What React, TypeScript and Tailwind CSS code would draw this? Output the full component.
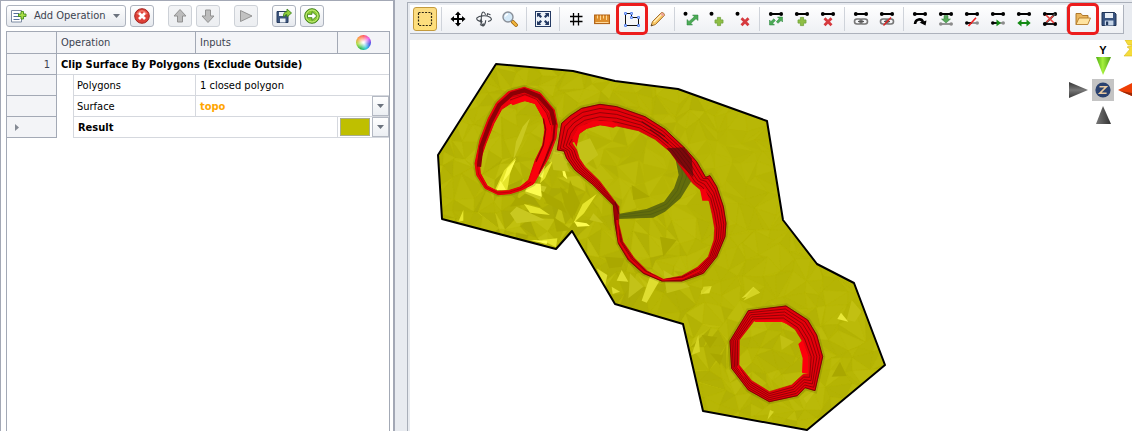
import type { ReactNode } from 'react';

type Point = [number, number];
/** outer x, outer y, inner x, inner y */
type RingPair = [number, number, number, number];

const BOUNDARY =
  '496,64 573,71 615,81 678,89 767,121 783,220 817,264 854,283 885,365 807,430 703,411 683,324 615,304 572,231 556,249 442,219 438,155';

const PIT_WEST: RingPair[] = [
  [283, 112, 285, 152], [330, 128, 315, 160], [373, 180, 340, 205], [382, 225, 345, 240],
  [378, 265, 338, 285], [355, 325, 316, 330], [310, 402, 296, 390], [275, 420, 270, 411],
  [240, 431, 235, 422], [205, 434, 203, 424], [165, 415, 172, 408], [140, 375, 151, 370],
  [135, 340, 148, 338], [150, 270, 168, 280], [175, 205, 192, 220], [200, 158, 215, 178],
  [235, 125, 245, 158],
];

const PIT_MAIN: RingPair[] = [
  [35, 100, 80, 150], [60, 78, 88, 130], [95, 55, 110, 115], [150, 43, 150, 105],
  [200, 50, 200, 108], [285, 80, 265, 122], [345, 118, 315, 148], [405, 175, 360, 185],
  [440, 215, 393, 232], [467, 262, 428, 280], [480, 257, 452, 300], [500, 290, 478, 335],
  [520, 350, 487, 375], [528, 400, 494, 415], [525, 440, 492, 450], [500, 500, 475, 500],
  [460, 550, 442, 532], [395, 573, 395, 558], [335, 573, 340, 568], [280, 550, 292, 543],
  [235, 510, 252, 503], [205, 460, 219, 455], [195, 400, 206, 400], [190, 345, 207, 350],
  [130, 285, 148, 272], [75, 240, 105, 230], [50, 205, 88, 205], [42, 183, 80, 180],
  [22, 180, 66, 158],
];

const PIT_SOUTH: RingPair[] = [
  [318, 198, 308, 243], [205, 212, 222, 243], [150, 303, 178, 300], [155, 385, 177, 375],
  [205, 450, 215, 422], [268, 485, 268, 455], [352, 467, 335, 435], [375, 443, 370, 403],
  [405, 452, 385, 402], [428, 350, 385, 350], [410, 285, 365, 300], [383, 240, 345, 268],
];

/** Contour of a pit at depth t, 0 being the rim and 1 the floor. */
function contour(pairs: RingPair[], t: number): string {
  return (
    'M' +
    pairs
      .map(([ox, oy, ix, iy]) => `${(ox + (ix - ox) * t).toFixed(1)} ${(oy + (iy - oy) * t).toFixed(1)}`)
      .join('L') +
    'Z'
  );
}

function noise(a: number, b: number): number {
  const n = Math.sin(a * 127.1 + b * 311.7) * 43758.5453;
  return n - Math.floor(n);
}

const ROUGH_SPOTS = [
  { x: 535, y: 205, r: 45, gain: 18 },
  { x: 480, y: 215, r: 40, gain: 8 },
  { x: 630, y: 280, r: 34, gain: 14 },
  { x: 705, y: 350, r: 40, gain: 10 },
];

/** Jittered triangle mesh with a flat shade per facet. */
function buildFacets() {
  const step = 14;
  const vertex = (c: number, r: number): Point => [
    425 + c * step + (noise(c, r) - 0.5) * 16,
    55 + r * step + (noise(r + 50, c) - 0.5) * 16,
  ];
  const facets: { points: string; fill: string }[] = [];
  for (let r = 0; r < 28; r++) {
    for (let c = 0; c < 34; c++) {
      const [p, q, s, t] = [vertex(c, r), vertex(c + 1, r), vertex(c + 1, r + 1), vertex(c, r + 1)];
      const flip = noise(c + 9, r + 4) > 0.5;
      const tris = flip ? [[p, q, s], [p, s, t]] : [[p, q, t], [q, s, t]];
      tris.forEach((tri, k) => {
        const [x, y] = tri[0];
        let gain = x > 700 && y < 300 ? 4 : 8;
        for (const spot of ROUGH_SPOTS) {
          const d = ((x - spot.x) ** 2 + (y - spot.y) ** 2) / spot.r ** 2;
          gain += spot.gain * Math.exp(-d);
        }
        const shade = (noise(c + k * 31, r * 3 + k) - 0.5) * gain * 1.3;
        const red = Math.round(183 + shade);
        const blue = Math.max(4, Math.round(5 + shade));
        facets.push({
          points: tri.map(([a, b]) => `${a.toFixed(1)},${b.toFixed(1)}`).join(' '),
          fill: `rgb(${red},${red - 1},${blue})`,
        });
      });
    }
  }
  return facets;
}

const FACETS = buildFacets();

function Benches({ pairs, count }: { pairs: RingPair[]; count: number }) {
  const levels = Array.from({ length: count }, (_, i) => i / count);
  return (
    <>
      <path d={contour(pairs, -0.04)} fill="none" stroke="#5a5a00" strokeOpacity=".22" strokeWidth="12" />
      <path d={contour(pairs, 0) + contour(pairs, 1)} fill="#e4000a" fillRule="evenodd" stroke="#c80008" strokeWidth="2" />
      {levels.map((t) => (
        <path key={t} d={contour(pairs, t)} fill="none" stroke="#6e0006" strokeOpacity=".85" strokeWidth={t ? 2.4 : 3} />
      ))}
    </>
  );
}

function TerrainView() {
  return (
    <svg className="block h-[391px] w-[722px] shrink-0" viewBox="410 40 722 391" role="img" aria-label="Clipped topography surface">
      <defs>
        <clipPath id="surface-clip">
          <polygon points={BOUNDARY} />
        </clipPath>
      </defs>
      <polygon points={BOUNDARY} fill="#b7b505" />
      <g clipPath="url(#surface-clip)">
        {FACETS.map((f, i) => (
          <polygon key={i} points={f.points} fill={f.fill} stroke={f.fill} strokeWidth=".5" />
        ))}
        {/* steep facets catching the light */}
        <g transform="translate(430 50) scale(.33333)">
          <path fill="#c9c820" d="M300 205L278 230 258 275 250 330 275 275ZM360 225L350 330 420 300 405 240ZM345 330L395 310 425 330 395 350ZM240 490L260 470 345 510 260 520ZM300 400L350 410 330 450 285 430Z" />
          <path fill="#aaa800" d="M330 420L395 455 410 490 350 460ZM260 440L300 462 240 470ZM420 390L450 460 432 500 412 440ZM370 500L425 540 380 545Z" />
          <path fill="#e6e52c" d="M258 322L222 362 196 418 232 420 240 372ZM370 330L338 362 330 400 345 385ZM500 432L458 462 430 520 462 490ZM100 480L85 515 100 512ZM282 462L330 475 360 495 300 488ZM335 570L382 565 378 592Z" />
          <path fill="#fdfc50" d="M258 328L232 355 216 400 238 372ZM300 398L332 402 335 440 285 424ZM395 350L402 352 412 388 400 378ZM432 514L470 520 480 528 442 530ZM212 392L200 420 228 420ZM320 375L345 345 338 385ZM300 570L352 572 350 582Z" />
        </g>
        <g transform="translate(550 90) scale(.33333)">
          <path fill="#c3c218" d="M80 160L120 145 145 195 92 235ZM130 370L160 400 118 390ZM0 185L40 200 60 245 10 240ZM240 550L280 590 235 625ZM340 540L420 590 350 610Z" />
          <path fill="#aaa800" d="M165 500L225 505 215 530 178 535ZM30 290L75 330 68 390 45 350ZM245 285L300 320 250 330ZM330 440L380 450 340 500Z" />
          <path fill="#dfde30" d="M140 535L172 555 165 590ZM215 540L235 575 200 572ZM305 545L330 570 290 638 275 632ZM455 600L485 588 478 610 452 612ZM610 590L630 608 575 625ZM185 590L210 605 188 612Z" />
        </g>
        <g transform="translate(680 240) scale(.33333)">
          <path fill="#d5d424" d="M220 142L240 158 190 182ZM70 140L95 138 62 165ZM55 285L60 335 35 345ZM270 510L282 515 262 540Z" />
          <path fill="#c2c012" d="M515 180L545 215 525 245 500 240ZM300 285L342 305 305 330ZM370 475L412 445 380 490Z" />
          <path fill="#e9e83a" d="M483 218L505 245 472 237Z" />
          <path fill="#a9a700" d="M480 365L500 408 455 410ZM90 340L130 345 120 375ZM65 285L112 292 90 325Z" />
        </g>

        {/* west pit */}
        <g transform="translate(430 50) scale(.33333)">
          <path d={contour(PIT_WEST, -0.04)} fill="none" stroke="#5a5a00" strokeOpacity=".22" strokeWidth="12" />
          <path d={contour(PIT_WEST, 0) + contour(PIT_WEST, 1)} fill="#f0000b" fillRule="evenodd" stroke="#e4000a" strokeWidth="3" />
          <path d={contour(PIT_WEST, 0.5)} fill="none" stroke="#a80008" strokeWidth="2" />
          <path fill="none" stroke="#8c0006" strokeWidth="13" d="M147 350L154 290 182 215 208 165 245 132 283 121 327 139 364 182 374 225" />
          <path fill="none" stroke="#8c0006" strokeWidth="6" d="M374 225L370 268 345 330 325 370" />
          <path fill="#fb000c" d="M238 155L285 138 320 150 350 190 364 220 362 268 345 322 314 398 298 394 318 332 338 285 345 238 338 205 315 162 285 153 248 166Z" />
          <path fill="none" stroke="#a00008" strokeWidth="3" d="M240 150L285 134 320 148 350 190 362 225" />
          <path fill="none" stroke="#8c0006" strokeWidth="4" d="M318 335L340 285 347 238 340 205" />
        </g>

        {/* main pit, with the overlapped phase in shade */}
        <g transform="translate(550 90) scale(.33333)">
          <path fill="#626c0c" d="M375 200L432 225 426 270 392 325 345 365 310 383 205 387 204 372 290 357 342 335 372 295 386 255Z" />
          <path fill="none" stroke="#4f5c10" strokeWidth="2" d="M394 215L397 258 382 302 350 342 300 364 206 376M408 225L409 262 390 310 350 354 302 373 206 381" />
          <Benches pairs={PIT_MAIN} count={5} />
          <path fill="#f5000c" d="M66 145L85 112 130 92 185 94 207 105 190 113 150 105 110 116 88 132 80 170ZM450 298L466 296 478 332 457 332Z" />
          {/* narrow stretches, where the benches run together */}
          <path fill="none" stroke="#e8000a" strokeWidth="5" d="M201 390L207 455 240 507 283 546 338 570 398 566 450 541" />
          <path fill="#4a0d0c" fillOpacity=".68" d="M350 175L402 172 425 205 430 262 385 218Z" />
          <path fill="none" stroke="#4a0810" strokeWidth="4" strokeOpacity=".6" d="M275 95L345 140M300 118L355 160M195 335L207 372" />
        </g>

        {/* south pit */}
        <g transform="translate(680 240) scale(.33333)">
          <Benches pairs={PIT_SOUTH} count={5} />
          <path fill="#fd000c" d="M355 312L368 300 384 345 385 402 366 398 368 355ZM225 241L308 241 330 256 305 246 225 246ZM174 375L196 415 190 408 172 382Z" />
        </g>
      </g>
      <polygon points={BOUNDARY} fill="none" stroke="#000" strokeWidth="2" strokeLinejoin="round" />
    </svg>
  );
}

function AxisGizmo() {
  return (
    <svg className="absolute right-0 top-0 h-[88px] w-16" viewBox="0 0 64 88" aria-label="View orientation">
      <defs>
        <linearGradient id="axis-y"><stop stopColor="#4fae10" /><stop offset=".45" stopColor="#a6f03c" /><stop offset="1" stopColor="#4a9e12" /></linearGradient>
        <linearGradient id="axis-dark"><stop stopColor="#777" /><stop offset="1" stopColor="#333" /></linearGradient>
        <linearGradient id="axis-side" x2="0" y2="1"><stop stopColor="#333" /><stop offset=".5" stopColor="#777" /><stop offset="1" stopColor="#3a3a3a" /></linearGradient>
      </defs>
      <path fill="#f5dc3a" stroke="#d8b81c" strokeWidth=".6" d="M57 0H66V5L60 5ZM66 5V16H56L62 9 59 7Z" />
      <text x="35" y="14" textAnchor="middle" fontSize="11" fontWeight="bold" fontFamily="Liberation Sans, sans-serif">Y</text>
      <path fill="url(#axis-y)" d="M28 17H43L35 35Z" />
      <path fill="url(#axis-side)" d="M1 42L20 50 1 58Z" />
      <rect x="24" y="39" width="22" height="22" fill="#c4c4c4" />
      <circle cx="35" cy="50" r="7.6" fill="#2a416f" />
      <path fill="none" stroke="#e8c9a0" strokeWidth="1.6" d="M31.5 46.8H38.3L31.8 53.2H38.6" />
      <path fill="#ee3e05" d="M50 50L64 43V56Z" />
      <path fill="#9b2805" d="M52 51L64 53V56Z" />
      <path fill="url(#axis-dark)" d="M28 84L35 66 43 84Z" />
    </svg>
  );
}

function Icon({ children }: { children: ReactNode }) {
  return (
    <svg className="size-4 shrink-0" viewBox="0 0 16 16" fill="none" aria-hidden="true">
      {children}
    </svg>
  );
}

/* shared glyph pieces */
const segment = (
  <g fill="#000">
    <path d="M2 2H14V4H2Z" />
    <circle cx="2.8" cy="3" r="1.9" />
    <circle cx="13.2" cy="3" r="1.9" />
  </g>
);
const node = <circle cx="2.5" cy="2.8" r="2" fill="#000" />;
const plus = <path fill="#8fbe45" stroke="#6fa33a" strokeWidth=".8" d="M6.4 6.4H9.6V8.9H12V12.1H9.6V14.6H6.4V12.1H4V8.9H6.4Z" />;
const cross = <path stroke="#d63a3f" strokeWidth="2.8" d="M4.5 7.2L11.5 14.2M11.5 7.2L4.5 14.2" />;
const stretch = <path fill="#4cab55" stroke="#26803a" strokeWidth=".5" d="M7.5 4H13V9.5L11 7.7 5.9 12.2 7.5 14H2V8.5L4 10.4 9.3 5.8Z" />;
const stretchWide = <path fill="#4cab55" stroke="#26803a" strokeWidth=".5" d="M9.5 6H14.5V11L13 9.5 10 12.3 8.3 10.7 11.2 7.8ZM6.5 14H1.5V9L3 10.5 5.8 7.8 7.4 9.4 4.7 12.2Z" />;
const link = (
  <>
    <rect x="1.5" y="8" width="7.5" height="5" rx="2.5" stroke="#777" strokeWidth="1.6" />
    <rect x="7" y="8" width="7.5" height="5" rx="2.5" stroke="#777" strokeWidth="1.6" />
    <path stroke="#555" strokeWidth="1.2" d="M5 10.5H11" />
  </>
);
const lowerSegment = (
  <>
    <path stroke="#000" strokeWidth="1.8" d="M3 12H8" />
    <circle cx="2.8" cy="12" r="1.8" fill="#000" />
    <path stroke="#8c8c8c" strokeWidth="1.8" d="M8 12H13" />
    <circle cx="13.2" cy="12" r="1.8" fill="#8c8c8c" />
  </>
);

const ICONS = {
  select: <path stroke="#2b2512" strokeWidth="1.2" strokeDasharray="2 1.3" d="M1.5 1.5H14.5V14.5H1.5Z" />,
  move: <path fill="#000" d="M8 .5L11 4H9V7H12V5L15.5 8 12 11V9H9V12H11L8 15.5 5 12H7V9H4V11L.5 8 4 5V7H7V4H5Z" />,
  rotate: (
    <g stroke="#454b52" strokeWidth="1.1">
      <path d="M9.5 3.8C9 1.5 7.4.4 6.5 1.3 5 3 4.8 12 6.5 14.6 8 16 9.6 12 9.7 9.2M7.8 12.5L6.5 14.7 4 13.5" />
      <path d="M12 10.5C15.5 10 16.5 8 14 6.2 10 4 3 4.6 1 6.8 0 8.6 2.2 10.4 5.8 10.6M4 8.6L6 10.6 4.2 12.4M11 5.5L11.5 2.8 14.5 3.8" />
    </g>
  ),
  zoom: (
    <>
      <path stroke="#a36a16" strokeWidth="3.8" strokeLinecap="round" d="M10.8 10.8L14 14" />
      <path stroke="#f3b73c" strokeWidth="2.2" strokeLinecap="round" d="M10.8 10.8L14 14" />
      <circle cx="6" cy="6" r="5" fill="#d4e9f8" stroke="#8a9099" strokeWidth="1.4" />
      <path stroke="#fff" strokeWidth="1.3" d="M3.2 5.6C3.5 4 4.5 3.2 6 3" />
    </>
  ),
  extents: (
    <>
      <rect x=".5" y=".5" width="15" height="15" fill="#eff4fa" stroke="#253a63" />
      <path fill="#253a63" d="M2 2H6.3L5 3.3 7 5.5 5.5 7 3.3 5 2 6.3ZM14 2V6.3L12.7 5 10.5 7 9 5.5 11 3.3 9.7 2ZM2 14V9.7L3.3 11 5.5 9 7 10.5 5 12.7 6.3 14ZM14 14H9.7L11 12.7 9 10.5 10.5 9 12.7 11 14 9.7Z" />
    </>
  ),
  grid: <path stroke="#000" strokeWidth="1.3" d="M5.5 2V14.5M10.5 2V14.5M2 5.5H14.5M2 10.5H14.5" />,
  ruler: (
    <>
      <rect x=".6" y="4" width="15" height="8.6" fill="#dd8e2c" stroke="#ad5c10" />
      <path stroke="#ffd897" d="M3.5 4.5V7.5M6.5 4.5V9M9.5 4.5V7.5M12.5 4.5V9M1.5 11.5H14.5" />
    </>
  ),
  polygon: (
    <>
      <path stroke="#111" d="M1.5 2.5H7.5V6.5H14.5V14.5H1.5Z" />
      <path fill="#fff" stroke="#3a6ff0" strokeWidth=".9" d="M.6 1.6H2.4V3.4H.6ZM6.6 1.6H8.4V3.4H6.6ZM6.6 5.6H8.4V7.4H6.6ZM13.6 5.6H15.4V7.4H13.6ZM.6 13.6H2.4V15.4H.6ZM13.6 13.6H15.4V15.4H13.6Z" />
    </>
  ),
  pencil: (
    <>
      <path fill="#f9c763" stroke="#9a6422" strokeWidth=".9" d="M2.5 10.5L11.5 1.5Q14.2 1.3 14.5 4.3L5.5 13.5 1 15Z" />
      <path stroke="#fff0c0" strokeWidth="1.2" d="M4 11L12 3" />
      <path fill="#f0a39a" d="M11.5 1.7Q14 1.5 14.2 4.4L12.8 5.6 10.3 3Z" />
      <path fill="#333" d="M1.6 13.2L3 14.2 1 15Z" />
    </>
  ),
  nodeMove: <>{node}<g transform="translate(2 0)">{stretch}</g></>,
  nodeAdd: <>{node}<g transform="translate(2 0)">{plus}</g></>,
  nodeDelete: <>{node}<g transform="translate(2 0)">{cross}</g></>,
  segMove: <>{segment}{stretchWide}</>,
  segAdd: <>{segment}{plus}</>,
  segDelete: <>{segment}{cross}</>,
  link: <>{segment}{link}</>,
  unlink: <>{segment}{link}<path stroke="#e02020" strokeWidth="1.4" d="M4.5 14.5L12 6.5" /></>,
  segArc: <>{segment}<path stroke="#000" strokeWidth="2.6" d="M3 13C3.5 7.6 9.5 7 11 11" /><path fill="#000" d="M7.5 11.5L14.5 9.5 13.5 14.5Z" /></>,
  segDrop: <>{segment}<path stroke="#8c8c8c" strokeWidth="1.8" d="M2 13H14" /><circle cx="2.8" cy="13" r="1.8" fill="#8c8c8c" /><circle cx="13.2" cy="13" r="1.8" fill="#8c8c8c" /><path fill="#58a85a" stroke="#2f7a38" strokeWidth=".5" d="M6 4.5H10V8H12.5L8 12 3.5 8H6Z" /></>,
  segCut: <>{segment}{lowerSegment}<path stroke="#ee2222" strokeWidth="1.6" d="M4.5 15L12 6.8" /></>,
  segExtend: <>{segment}{lowerSegment}<path fill="#138a13" d="M6.5 8.5L11 12 6.5 15.3Z" /></>,
  segSlide: <>{segment}<path fill="#138a13" d="M1.3 12L5.5 8.5V11H10.5V8.5L14.7 12 10.5 15.5V13H5.5V15.5Z" /></>,
  segReverse: (
    <>
      {segment}
      <path stroke="#444" strokeWidth="1.9" d="M13 3L3 13" />
      <path stroke="#000" strokeWidth="1.8" d="M3 13H13" />
      <circle cx="2.8" cy="13" r="1.9" fill="#000" />
      <circle cx="13.2" cy="13" r="1.9" fill="#000" />
      <path stroke="#e8403c" strokeWidth="1.7" d="M4 4L12 12M11 5L4.5 11" />
    </>
  ),
  open: (
    <>
      <path fill="#eab65e" stroke="#a66d1e" strokeWidth=".9" d="M1 13.5V2.5H6L7.5 4.5H13V7" />
      <path fill="#ffe3a0" stroke="#b47a28" strokeWidth=".9" d="M1 13.5L4 7H15.5L12.8 13.5Z" />
    </>
  ),
  save: (
    <>
      <path fill="#37527e" stroke="#1f3355" d="M1 1.5H13.5L15 3V14.5H1Z" />
      <rect x="4" y="2" width="8" height="5" fill="#e9eff6" />
      <rect x="3.8" y="9.5" width="8.6" height="5" fill="#c7d6e8" />
      <rect x="5" y="10.5" width="2.2" height="3.5" fill="#233a60" />
    </>
  ),
};

type IconName = keyof typeof ICONS;
type Tool = { icon: IconName; label: string; active?: boolean; marked?: boolean };

const VIEW_TOOLS: Tool[][] = [
  [{ icon: 'select', label: 'Select', active: true }],
  [
    { icon: 'move', label: 'Pan' },
    { icon: 'rotate', label: 'Rotate' },
    { icon: 'zoom', label: 'Zoom' },
  ],
  [{ icon: 'extents', label: 'Zoom to extents' }],
  [
    { icon: 'grid', label: 'Grid' },
    { icon: 'ruler', label: 'Measure' },
  ],
];

const EDIT_TOOLS: Tool[][] = [
  [
    { icon: 'polygon', label: 'Draw polygon', marked: true },
    { icon: 'pencil', label: 'Edit' },
  ],
  [
    { icon: 'nodeMove', label: 'Move point' },
    { icon: 'nodeAdd', label: 'Add point' },
    { icon: 'nodeDelete', label: 'Delete point' },
  ],
  [
    { icon: 'segMove', label: 'Move segment' },
    { icon: 'segAdd', label: 'Add segment' },
    { icon: 'segDelete', label: 'Delete segment' },
  ],
  [
    { icon: 'link', label: 'Join' },
    { icon: 'unlink', label: 'Unjoin' },
  ],
  [
    { icon: 'segArc', label: 'Reverse direction' },
    { icon: 'segDrop', label: 'Drape' },
    { icon: 'segCut', label: 'Break' },
    { icon: 'segExtend', label: 'Extend' },
    { icon: 'segSlide', label: 'Stretch' },
    { icon: 'segReverse', label: 'Clean' },
  ],
  [
    { icon: 'open', label: 'Open', marked: true },
    { icon: 'save', label: 'Save' },
  ],
];

function ToolButton({ tool }: { tool: Tool }) {
  return (
    <button
      type="button"
      aria-label={tool.label}
      className="relative flex h-6 w-[26px] shrink-0 items-center justify-center"
    >
      {tool.active && (
        <span className="absolute inset-x-px inset-y-0 rounded-[3px] border border-[#c39a3c] bg-linear-to-b from-[#fbdc83] to-[#ffe07a]" />
      )}
      <span className="relative">
        <Icon>{ICONS[tool.icon]}</Icon>
      </span>
      {tool.marked && (
        <span className="pointer-events-none absolute -inset-x-[3px] -inset-y-1 z-10 rounded-[5px] border-[3px] border-[#ec1c1c]" />
      )}
    </button>
  );
}

function ToolStrip({ groups, label }: { groups: Tool[][]; label: string }) {
  return (
    <div
      role="toolbar"
      aria-label={label}
      className="flex h-[29px] items-center border-b border-r border-[#adb2bc] bg-linear-to-b from-white to-[#eef0f4] pl-[2px] pr-px"
    >
      {groups.map((group, i) => (
        <div key={i} className="flex items-center">
          {i > 0 && <span className="mx-[3px] h-6 w-px bg-[#cfd3da]" />}
          {group.map((tool) => (
            <ToolButton key={tool.icon} tool={tool} />
          ))}
        </div>
      ))}
    </div>
  );
}

function PanelButton({ label, disabled, children }: { label: string; disabled?: boolean; children: ReactNode }) {
  return (
    <button
      type="button"
      aria-label={label}
      disabled={disabled}
      className="flex h-[22px] w-6 items-center justify-center rounded-[3px] border border-[#adb3be] bg-linear-to-b from-white to-[#e6e9ee] disabled:border-[#cdd1d7] disabled:from-[#f3f4f6] disabled:to-[#eceef1]"
    >
      <Icon>{children}</Icon>
    </button>
  );
}

function Caret() {
  return (
    <svg className="h-1 w-[7px]" viewBox="0 0 7 4" aria-hidden="true">
      <path fill="#6b727d" d="M0 0H7L3.5 4Z" />
    </svg>
  );
}

function DropCell({ label }: { label: string }) {
  return (
    <td className="border-b border-[#d5d8de]">
      <button
        type="button"
        aria-label={label}
        className="flex h-5 w-full items-center justify-center border border-[#b4b9c3] bg-linear-to-b from-white to-[#eceff3]"
      >
        <Caret />
      </button>
    </td>
  );
}

const rowHead = 'border-b border-r border-[#a3a9b5] bg-[#f3f4f7] font-normal';
const cell = 'border-b border-[#d5d8de]';

function OperationsTable() {
  return (
    <table className="w-full table-fixed border-separate border-spacing-0 text-left whitespace-nowrap">
      <colgroup>
        <col className="w-[50px]" />
        <col className="w-[17px]" />
        <col className="w-[122px]" />
        <col />
        <col className="w-[34px]" />
        <col className="w-[17px]" />
      </colgroup>
      <thead className="bg-[#f3f4f7] text-[#3c4350]">
        <tr className="h-[22px]">
          <th className={rowHead} aria-label="Row" />
          <th colSpan={2} className="border-b border-r border-[#a3a9b5] pl-1 font-normal">Operation</th>
          <th className="border-b border-r border-[#a3a9b5] pl-1 font-normal">Inputs</th>
          <th colSpan={2} className="border-b border-[#a3a9b5] font-normal" aria-label="Colour">
            <span
              className="mx-auto block size-[15px] rounded-full bg-[radial-gradient(circle,#fff_5%,transparent_65%),conic-gradient(#ff5a5a,#ee58e8,#3e4ee8,#29c8dc,#27b84c,#a8dc3c,#ff9a40,#ff5a5a)]"
            />
          </th>
        </tr>
      </thead>
      <tbody className="text-black">
        <tr className="h-[21px]">
          <th scope="row" className={`${rowHead} pr-[6px] pt-[2px] text-right text-[#3c4350]`}>1</th>
          <td colSpan={5} className={`${cell} pl-1 pt-[2px] font-bold`}>Clip Surface By Polygons (Exclude Outside)</td>
        </tr>
        <tr className="h-[21px]">
          <th className={rowHead} />
          <td className="border-r border-[#d5d8de]" />
          <td className={`${cell} border-r pl-[3px] pt-[2px]`}>Polygons</td>
          <td colSpan={3} className={`${cell} pl-1 pt-[2px]`}>1 closed polygon</td>
        </tr>
        <tr className="h-[21px]">
          <th className={rowHead} />
          <td className="border-r border-[#d5d8de]" />
          <td className={`${cell} border-r pl-[3px] pt-[2px]`}>Surface</td>
          <td colSpan={2} className={`${cell} pl-1 pt-[2px] font-bold text-[#ffa500]`}>topo</td>
          <DropCell label="Choose surface" />
        </tr>
        <tr className="h-[21px]">
          <th className={`${rowHead} pl-2`}>
            <svg className="h-[7px] w-1" viewBox="0 0 4 7" aria-hidden="true">
              <path fill="#848a94" d="M0 0L4 3.5 0 7Z" />
            </svg>
          </th>
          <td className="border-r border-[#d5d8de]" />
          <td colSpan={2} className={`${cell} border-r pl-1 pt-[2px] font-bold`}>Result</td>
          <td className={`${cell} px-[2px]`}>
            <span className="block h-[18px] border border-[#a9ad8a] bg-[#bfbf00]" />
          </td>
          <DropCell label="Choose result colour" />
        </tr>
      </tbody>
    </table>
  );
}

function OperationsPanel() {
  return (
    <section className="flex w-[395px] shrink-0 flex-col border-l border-r-2 border-t border-[#a3a8b5] bg-white pl-[5px] pr-[3px] pt-1">
      <div className="mb-1 flex items-center gap-1">
        <button
          type="button"
          className="flex h-[22px] w-[120px] items-center rounded-[3px] border border-[#adb3be] bg-linear-to-b from-white to-[#e6e9ee] pl-1 pr-[5px] text-[#3c4350]"
        >
          <Icon>
            <path fill="#fff" stroke="#7d8ba3" d="M.5 2.5H10.5V14H.5Z" />
            <path stroke="#54719c" d="M2.5 5.5H8M2.5 8.5H9M2.5 11.5H8.5" />
            <path fill="#a9dc46" stroke="#438b1a" strokeWidth=".9" d="M10 3.5H12.5V6H15V8.5H12.5V11H10V8.5H7.5V6H10Z" />
          </Icon>
          <span className="ml-[7px] flex-1 text-left whitespace-nowrap">Add Operation</span>
          <Caret />
        </button>
        <PanelButton label="Delete">
          <circle cx="8" cy="8" r="7.3" fill="#dd4037" stroke="#a32420" />
          <path stroke="#f27a6c" strokeWidth="1.5" d="M3 6Q8-.5 13 6" />
          <path stroke="#fff" strokeWidth="2.7" d="M5 5L11 11M11 5L5 11" />
        </PanelButton>
        <div className="ml-[10px] flex gap-1">
          <PanelButton label="Move up" disabled>
            <path fill="#bcbcbc" stroke="#919191" d="M8 1.5L14 8H10.5V14H5.5V8H2Z" />
          </PanelButton>
          <PanelButton label="Move down" disabled>
            <path fill="#bcbcbc" stroke="#919191" d="M8 14.5L14 8H10.5V2H5.5V8H2Z" />
          </PanelButton>
        </div>
        <div className="ml-[10px]">
          <PanelButton label="Run" disabled>
            <path fill="#c2c2c2" stroke="#949494" d="M2.5 2.5L14 8 2.5 13.5Z" />
          </PanelButton>
        </div>
        <div className="ml-[10px] flex gap-1">
          <PanelButton label="Save and export">
            <path fill="#3c557e" stroke="#253a5c" d="M1 3.5H12V14.5H1Z" />
            <path fill="#edf2f8" d="M3 4H9V8H3ZM4 10.5H9.5V14.5H4Z" />
            <path fill="#91ce3c" stroke="#3c841c" strokeWidth=".9" d="M7.5 9Q7 4 11 3.6V1L15.5 5 11 9V6.6Q9 6.5 7.5 9Z" />
          </PanelButton>
          <PanelButton label="Execute">
            <circle cx="8" cy="8" r="7.3" fill="#8bcc32" stroke="#40811b" />
            <circle cx="8" cy="8" r="6" stroke="#c6ec80" />
            <path fill="#fff" stroke="#40811b" strokeWidth=".9" d="M3.5 6.3H8V3.6L12.8 8 8 12.4V9.7H3.5Z" />
          </PanelButton>
        </div>
      </div>
      <div className="flex-1 border border-b-0 border-[#a3a9b5]">
        <OperationsTable />
      </div>
    </section>
  );
}

export default function App() {
  return (
    <div className="flex min-h-screen overflow-hidden bg-[#e8ebf0] font-['DejaVu_Sans_Condensed','DejaVu_Sans',sans-serif] text-[11px] leading-4">
      <OperationsPanel />
      <main className="ml-3 mt-[2px] flex min-w-0 flex-1 flex-col border-l border-t border-[#a9afb9] pl-[2px] pt-[2px]">
        <div className="flex">
          <ToolStrip groups={VIEW_TOOLS} label="View" />
          <ToolStrip groups={EDIT_TOOLS} label="Edit" />
        </div>
        <div className="relative mt-[6px] flex-1 overflow-hidden bg-white">
          <TerrainView />
          <AxisGizmo />
        </div>
      </main>
    </div>
  );
}
